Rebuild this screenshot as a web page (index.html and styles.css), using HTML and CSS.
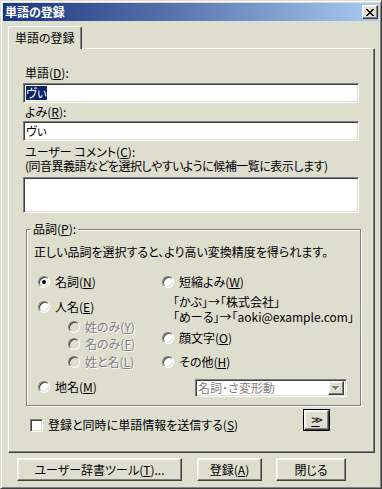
FILE: index.html
```html
<!DOCTYPE html>
<html lang="ja">
<head>
  <meta charset="UTF-8" />
  <title>単語の登録</title>
  <link rel="stylesheet" href="styles.css">
</head>
<body>

<div class="window">
  <div class="titlebar">
    <span class="title">単語の登録</span>
    <button class="close-btn raised" aria-label="閉じる">
      <svg width="8" height="7" viewBox="0 0 8 7" shape-rendering="crispEdges"><path fill="#000" d="M0 0h2v1H0zM6 0h2v1H6zM1 1h2v1H1zM5 1h2v1H5zM2 2h4v1H2zM3 3h2v1H3zM2 4h4v1H2zM1 5h2v1H1zM5 5h2v1H5zM0 6h2v1H0zM6 6h2v1H6z"/></svg>
    </button>
  </div>

  <div class="client">
    <div class="tabs">
      <div class="tab">単語の登録</div>
    </div>

    <div class="panel">
      <div class="label">単語(<u>D</u>):</div>
      <div class="edit edit-word"><span class="sel">ヴぃ</span></div>

      <div class="label label-yomi">よみ(<u>R</u>):</div>
      <div class="edit edit-yomi"><span>ヴぃ</span></div>

      <div class="label label-comment">ユーザー コメント(<u>C</u>):</div>
      <div class="label label-note">(同音異義語などを選択しやすいように候補一覧に表示します)</div>
      <div class="edit memo"></div>

      <fieldset class="group">
        <legend>品詞(<u>P</u>):</legend>
        <p class="hint">正しい品詞を選択すると、より高い変換精度を得られます。</p>

        <div class="pos">
          <div class="col">
            <label class="radio"><span class="rb checked"></span><span>名詞(<u>N</u>)</span></label>
            <label class="radio r-person"><span class="rb"></span><span>人名(<u>E</u>)</span></label>
            <div class="sub">
              <label class="radio disabled"><span class="rb"></span><span>姓のみ(<u>Y</u>)</span></label>
              <label class="radio disabled r-first"><span class="rb"></span><span>名のみ(<u>F</u>)</span></label>
              <label class="radio disabled r-full"><span class="rb"></span><span>姓と名(<u>L</u>)</span></label>
            </div>
            <label class="radio r-place"><span class="rb"></span><span>地名(<u>M</u>)</span></label>
          </div>

          <div class="col">
            <label class="radio"><span class="rb"></span><span>短縮よみ(<u>W</u>)</span></label>
            <div class="examples">
              <div>「かぶ」→「株式会社」</div>
              <div>「めーる」→「aoki@example.com」</div>
            </div>
            <label class="radio r-face"><span class="rb"></span><span>顔文字(<u>O</u>)</span></label>
            <label class="radio r-other"><span class="rb"></span><span>その他(<u>H</u>)</span></label>
            <div class="combo">
              <span class="combo-text">名詞･さ変形動</span>
              <span class="combo-btn raised">
                <svg width="8" height="5" viewBox="0 0 8 5" shape-rendering="crispEdges"><path fill="#fff" d="M1 1h7v1H1zM2 2h5v1H2zM3 3h3v1H3zM4 4h1v1H4z"/><path fill="#808080" d="M0 0h7v1H0zM1 1h5v1H1zM2 2h3v1H2zM3 3h1v1H3z"/></svg>
              </span>
            </div>
          </div>
        </div>
      </fieldset>

      <div class="send-row">
        <label class="check"><span class="cb"></span><span>登録と同時に単語情報を送信する(<u>S</u>)</span></label>
        <button class="more-btn raised"><u>&gt;&gt;</u></button>
      </div>
    </div>

    <div class="actions">
      <button class="btn raised btn-tool">ユーザー辞書ツール(<u>T</u>)...</button>
      <button class="btn raised btn-add">登録(<u>A</u>)</button>
      <button class="btn raised btn-close">閉じる</button>
    </div>
  </div>
</div>

</body>
</html>
```

FILE: styles.css
```css
body {
  margin:0; background:#dedecf;
  font: 12px/14px "Noto Sans CJK JP", sans-serif;
  font-feature-settings:"palt";
  color:#000;
}
u { text-underline-offset:1px; }
button { font:inherit; color:inherit; padding:0; }

/* WINDOW FRAME */
.window {
  width:382px; height:489px; box-sizing:border-box;
  border:1px solid; border-color:#dedecf #404040 #404040 #dedecf;
  box-shadow: inset 1px 1px #fff, inset -1px -1px #808080;
  padding:2px;
}
.titlebar {
  height:18px; display:flex; align-items:center;
  background:linear-gradient(90deg, #1a3680, #5773ad 45%, #a8ccf2);
  color:#fff; font-weight:bold; padding-left:2px;
}
.close-btn {
  width:16px; height:14px; margin:0 1px 0 auto;
  display:flex; align-items:center; justify-content:center;
}

/* 3D edges */
.raised {
  background:#dedecf; box-sizing:border-box;
  border:1px solid; border-color:#fff #404040 #404040 #fff;
  box-shadow: inset -1px -1px #808080, inset 1px 1px #f1f1e8;
}
.edit, .combo, .cb {
  background:#fff; box-sizing:border-box;
  border:1px solid; border-color:#808080 #fff #fff #808080;
  box-shadow: inset 1px 1px #404040, inset -1px -1px #dedecf;
}

.client { padding:5px 4px 0 5px; }

/* TAB */
.tabs { display:flex; }
.tab {
  position:relative; z-index:1;
  height:23px; margin-bottom:-1px; box-sizing:border-box;
  padding:0 6px; line-height:21px;
  background:#dedecf;
  border:1px solid #fff; border-bottom:none; border-right-color:#404040;
  border-radius:2px 2px 0 0;
  box-shadow: inset -1px 0 #808080;
}
.panel {
  border:1px solid; border-color:#fff #404040 #404040 #fff;
  box-shadow: inset -1px -1px #808080;
  padding:17px 15px 20px 14px;
}

/* FIELDS */
.label { padding-left:2px; }
.label-yomi { margin-top:2px; }
.label-comment { margin-top:4px; }
.label-note { letter-spacing:-0.5px; }
.edit {
  height:20px; margin-top:3px; padding:0 2px;
  display:flex; align-items:center;
}
.edit-yomi { margin-top:2px; }
.sel { background:#0a246a; color:#fff; }
.memo { height:36px; margin-top:4px; }

/* GROUP BOX */
.group {
  width:335px; box-sizing:border-box; min-width:0;
  margin:9px 0 0 3px; padding:9px 0 8px 7px;
  border:1px solid #808080;
  box-shadow: inset 1px 1px #fff, 1px 1px #fff;
}
.group legend { padding:0 2px; margin-left:-3px; background:#dedecf; }
.hint { margin:0; }

.pos {
  display:grid; grid-template-columns:124px 1fr;
  margin:15px 0 0 4px;
}
.col { display:flex; flex-direction:column; align-items:flex-start; }

.radio { display:flex; align-items:center; gap:5px; height:16px; }
.r-person { margin-top:9px; }
.sub { margin:4px 0 0 30px; }
.r-first { margin-top:1px; }
.r-full { margin-top:2px; }
.r-place { margin-top:9px; }
.examples { margin:4px 0 0 11px; line-height:15px; }
.r-face { margin-top:6px; }
.r-other { margin-top:8px; }

.rb {
  width:12px; height:12px; box-sizing:border-box; border-radius:50%;
  border:1px solid; border-color:#808080 #fff #fff #808080;
  background:#fff;
  box-shadow: inset 1px 1px #404040, inset -1px -1px #dedecf;
  display:flex; align-items:center; justify-content:center;
}
.rb.checked::after {
  content:""; width:4px; height:4px; border-radius:50%; background:#000;
}
.disabled { color:#808080; text-shadow:1px 1px #fff; }
.disabled .rb { background:#dedecf; }

.combo {
  width:152px; height:18px; margin:9px 0 0 33px;
  display:flex; align-items:center; padding:2px;
  color:#808080;
}
.combo-text { flex:1; }
.combo-btn {
  width:16px; height:14px;
  display:flex; align-items:center; justify-content:center;
}

/* SEND ROW */
.send-row { display:flex; align-items:flex-start; margin-top:3px; }
.check { display:flex; align-items:center; gap:5px; margin:9px 0 0 7px; }
.cb { width:13px; height:13px; }
.more-btn {
  width:27px; height:22px; margin:0 29px 0 auto;
  outline:1px solid #000; outline-offset:-1px;
  border-width:2px;
  font-size:13px; letter-spacing:-3px; text-indent:-2px;
}

/* BOTTOM BUTTONS */
.actions { display:flex; margin-top:5px; padding-left:9px; }
.btn { height:23px; }
.btn-tool { width:165px; }
.btn-add { width:65px; margin-left:15px; }
.btn-close { width:70px; margin-left:14px; }
```
